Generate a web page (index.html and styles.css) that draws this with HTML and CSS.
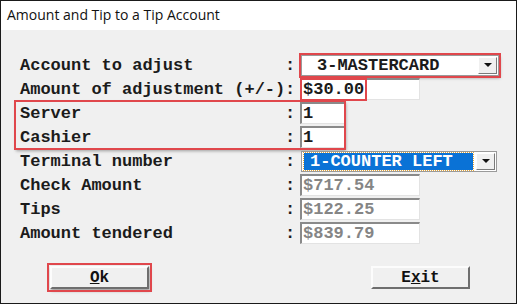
FILE: index.html
```html
<!DOCTYPE html>
<html lang="en">
  <head>
    <meta charset="UTF-8" />
    <meta name="viewport" content="width=device-width, initial-scale=1.0" />
    <title>Amount and Tip to a Tip Account</title>

    <link rel="stylesheet" href="styles.css">
  </head>
  <body>
    <div class="window">
      <div class="title-bar">Amount and Tip to a Tip Account</div>

      <div class="content">
        <div class="row">
          <span class="label">Account to adjust</span>
          <span class="colon">:</span>
          <div class="combo marked">
            <span class="combo-text">3-MASTERCARD</span>
            <span class="combo-arrow"></span>
          </div>
        </div>

        <div class="row">
          <span class="label">Amount of adjustment (+/-)</span>
          <span class="colon">:</span>
          <div class="field wide"><span class="value marked">$30.00</span></div>
        </div>

        <div class="group marked">
          <div class="row">
            <span class="label">Server</span>
            <span class="colon">:</span>
            <div class="field small"><span class="value">1</span></div>
          </div>
          <div class="row">
            <span class="label">Cashier</span>
            <span class="colon">:</span>
            <div class="field small"><span class="value">1</span></div>
          </div>
        </div>

        <div class="row">
          <span class="label">Terminal number</span>
          <span class="colon">:</span>
          <div class="combo terminal">
            <span class="combo-text selected">1-COUNTER LEFT</span>
            <span class="combo-arrow"></span>
          </div>
        </div>

        <div class="row">
          <span class="label">Check Amount</span>
          <span class="colon">:</span>
          <div class="field wide"><span class="value disabled">$717.54</span></div>
        </div>

        <div class="row">
          <span class="label">Tips</span>
          <span class="colon">:</span>
          <div class="field wide"><span class="value disabled">$122.25</span></div>
        </div>

        <div class="row">
          <span class="label">Amount tendered</span>
          <span class="colon">:</span>
          <div class="field wide"><span class="value disabled">$839.79</span></div>
        </div>

        <div class="buttons">
          <button class="btn marked"><u>O</u>k</button>
          <button class="btn">E<u>x</u>it</button>
        </div>
      </div>
    </div>
  </body>
</html>
```

FILE: styles.css
```css
body {
  margin: 0;
  background-color: white;
}

.window {
  width: 517px;
  height: 304px;
  box-sizing: border-box;
  border: 1px solid #1a1a1a;
  display: flex;
  flex-direction: column;
  background-color: #f0f0f0;
}

.title-bar {
  height: 29px;
  background-color: white;
  font-family: "Open Sans", "Liberation Sans", sans-serif;
  font-size: 14px;
  line-height: 27px;
  padding-left: 6px;
  color: #111;
}

.content {
  padding: 23px 0 0 19px;
  font-family: "Liberation Mono", "DejaVu Sans Mono", monospace;
  font-size: 17px;
  font-weight: bold;
  color: #1b1b1b;
}

.row {
  display: flex;
  align-items: center;
  height: 24px;
}

.label {
  width: 265px;
  white-space: pre;
}

.colon {
  width: 15px;
}

/* red annotation boxes */
.marked {
  outline: 2px solid #e0474c;
  box-shadow: 1px 2px 3px rgba(0, 0, 0, 0.35);
}

.group {
  width: fit-content;
  margin-left: -5px;
  padding-left: 5px;
  outline-offset: -1px;
}

.field {
  height: 22px;
  box-sizing: border-box;
  background-color: white;
  border-top: 2px solid #8a8a8a;
  border-left: 2px solid #8a8a8a;
  border-right: 1px solid #e3e3e3;
  border-bottom: 1px solid #e3e3e3;
  display: flex;
  align-items: center;
  padding-left: 1px;
}

.field.wide {
  width: 120px;
}

.field.small {
  width: 45px;
}

.value {
  line-height: 17px;
}

.value.marked {
  outline-offset: 1px;
  box-shadow: none;
}

.value.disabled {
  color: #858585;
}

.combo {
  height: 21px;
  width: 197px;
  box-sizing: border-box;
  background-color: white;
  border: 1px solid #9a9a9a;
  display: flex;
  align-items: center;
  justify-content: space-between;
  padding: 0 1px 0 2px;
}

.combo.marked {
  width: 198px;
  margin-left: 1px;
}

.combo.terminal {
  margin-left: 1px;
  width: 196px;
}

.combo-text {
  padding-left: 13px;
}

.combo-text.selected {
  flex: 1;
  height: 17px;
  line-height: 17px;
  padding-left: 6px;
  margin-right: 3px;
  background-color: #0a72d6;
  color: white;
  outline: 1px dotted #e3a53a;
}

.combo-arrow {
  width: 19px;
  height: 17px;
  box-sizing: border-box;
  background-color: #f0f0f0;
  border: 1px solid;
  border-color: #fff #7a7a7a #7a7a7a #fff;
  display: flex;
  align-items: center;
  justify-content: center;
}

.combo-arrow::after {
  content: "";
  border-left: 4px solid transparent;
  border-right: 4px solid transparent;
  border-top: 4px solid #111;
}

.buttons {
  display: flex;
  gap: 222px;
  padding: 21px 0 0 30px;
}

.btn {
  width: 99px;
  height: 23px;
  background-color: #f0f0f0;
  border: 2px solid;
  border-color: #fcfcfc #6e6e6e #6e6e6e #fcfcfc;
  font-family: "Liberation Mono", monospace;
  font-size: 16px;
  font-weight: bold;
  color: #111;
  padding: 0;
}

.btn.marked {
  outline-offset: 1px;
}
```
